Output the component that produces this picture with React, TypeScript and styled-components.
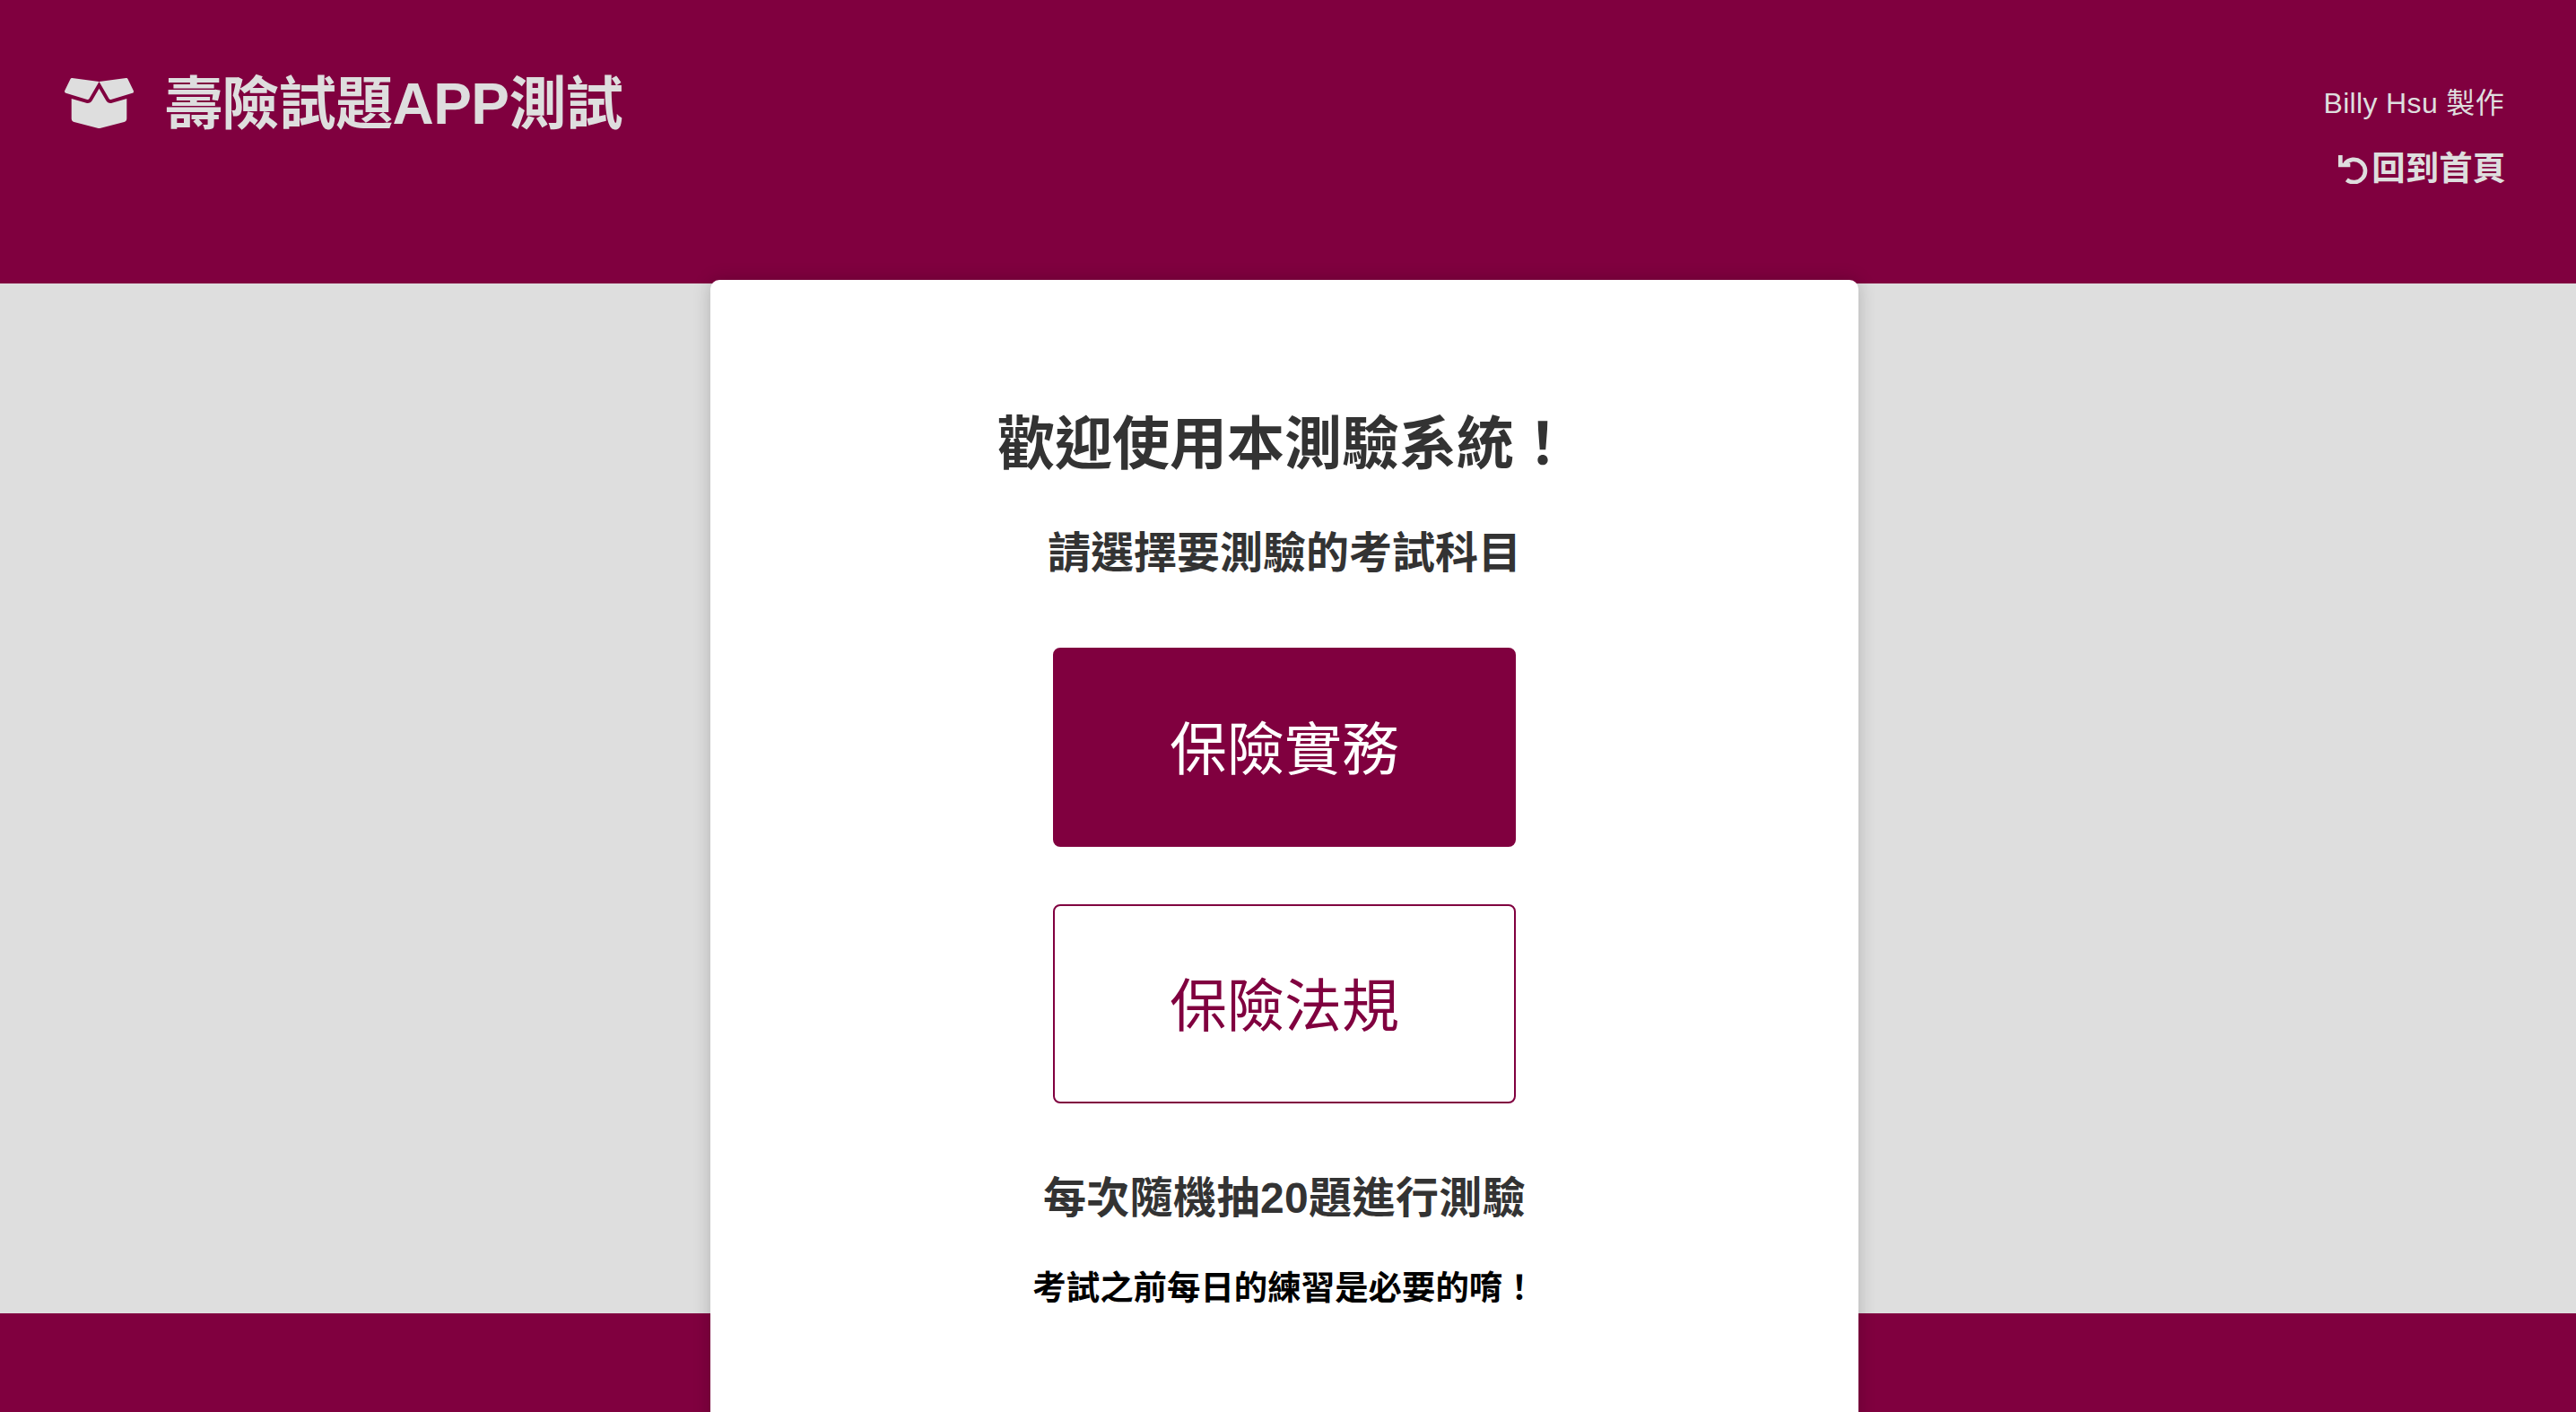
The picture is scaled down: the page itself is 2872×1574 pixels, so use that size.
import styled, { createGlobalStyle } from "styled-components";
import { FaBoxOpen } from "react-icons/fa";

const brand = "#80003f";
const pale = "#dedede";

const GlobalStyle = createGlobalStyle`
  html, body {
    margin: 0;
    height: 100%;
    overflow: hidden;
    background: ${pale};
    font-family: "Liberation Sans", "Noto Sans CJK TC", sans-serif;
  }
`;

const Page = styled.div`
  display: grid;
  grid-template-rows: 316px minmax(0, 1fr) 110px;
  height: 100vh;
  overflow: hidden;
`;

const Header = styled.header`
  display: flex;
  justify-content: space-between;
  align-items: flex-start;
  padding: 78px 80px 0 72px;
  background: ${brand};
  color: ${pale};
`;

const Brand = styled.h1`
  display: flex;
  align-items: center;
  gap: 35px;
  margin: -2px 0 0;
  font-size: 64px;
  line-height: 80px;
  font-weight: 700;
  letter-spacing: -0.6px;
`;

const BoxIcon = styled(FaBoxOpen)`
  width: 77px;
  height: 64px;
  margin-bottom: 2px;
`;

const HeaderLinks = styled.div`
  display: flex;
  flex-direction: column;
  align-items: flex-end;
`;

const Author = styled.span`
  margin-top: 14px;
  font-size: 32px;
  line-height: 46px;
  letter-spacing: 0.35px;
`;

const HomeLink = styled.a`
  display: flex;
  align-items: center;
  gap: 2px;
  margin: 25px -2px 0 0;
  font-size: 37.44px;
  line-height: 50px;
  font-weight: 700;
`;

const Main = styled.main`
  display: flex;
  justify-content: center;
  min-height: 0;
  padding-right: 8px;
  background: ${pale};
`;

const Card = styled.section`
  position: relative;
  z-index: 1;
  display: flex;
  flex-direction: column;
  align-items: center;
  flex: none;
  box-sizing: border-box;
  width: 1280px;
  height: 1300px;
  margin-top: -4px;
  padding-top: 143px;
  background: #fff;
  border-radius: 10px;
  box-shadow: 0 0 20px rgba(0, 0, 0, 0.2);
  color: #333;
`;

const Welcome = styled.h1`
  margin: 0;
  font-size: 64px;
  line-height: 80px;
  font-weight: 700;
`;

const Subtitle = styled.h2<{ $top: number }>`
  margin: ${(p) => p.$top}px 0 0;
  font-size: 48px;
  line-height: 60px;
  font-weight: 700;
`;

const Hint = styled(Subtitle)`
  letter-spacing: 0.4px;
`;

const SubjectList = styled.div`
  display: flex;
  flex-direction: column;
  gap: 64px;
  margin-top: 75px;
`;

const SubjectButton = styled.button<{ $active?: boolean }>`
  box-sizing: border-box;
  width: 516px;
  height: 222px;
  padding: 0 0 6px;
  border: 2px solid ${brand};
  border-radius: 8px;
  background: ${(p) => (p.$active ? brand : "#fff")};
  color: ${(p) => (p.$active ? "#fff" : brand)};
  font-family: inherit;
  font-size: 64px;
`;

const Note = styled.h3`
  margin: 48px 0 0;
  color: #000;
  font-size: 37.44px;
  line-height: 44px;
  font-weight: 700;
`;

const Footer = styled.footer`
  background: ${brand};
`;

const UndoIcon = () => (
  <svg width="35" height="34" viewBox="50 58 105 102" fill="none" stroke="currentColor" strokeWidth="14">
    <path d="M78 146A38 38 0 1 0 72 93" />
    <path d="M57 64V97H90" />
  </svg>
);

const App = () => {
  return (
    <Page>
      <GlobalStyle />
      <Header>
        <Brand>
          <BoxIcon preserveAspectRatio="none" />
          壽險試題APP測試
        </Brand>
        <HeaderLinks>
          <Author>Billy Hsu 製作</Author>
          <HomeLink>
            <UndoIcon />
            回到首頁
          </HomeLink>
        </HeaderLinks>
      </Header>
      <Main>
        <Card>
          <Welcome>歡迎使用本測驗系統！</Welcome>
          <Subtitle $top={52}>請選擇要測驗的考試科目</Subtitle>
          <SubjectList>
            <SubjectButton $active>保險實務</SubjectButton>
            <SubjectButton>保險法規</SubjectButton>
          </SubjectList>
          <Hint $top={76}>每次隨機抽20題進行測驗</Hint>
          <Note>考試之前每日的練習是必要的唷！</Note>
        </Card>
      </Main>
      <Footer />
    </Page>
  );
};

export default App;
